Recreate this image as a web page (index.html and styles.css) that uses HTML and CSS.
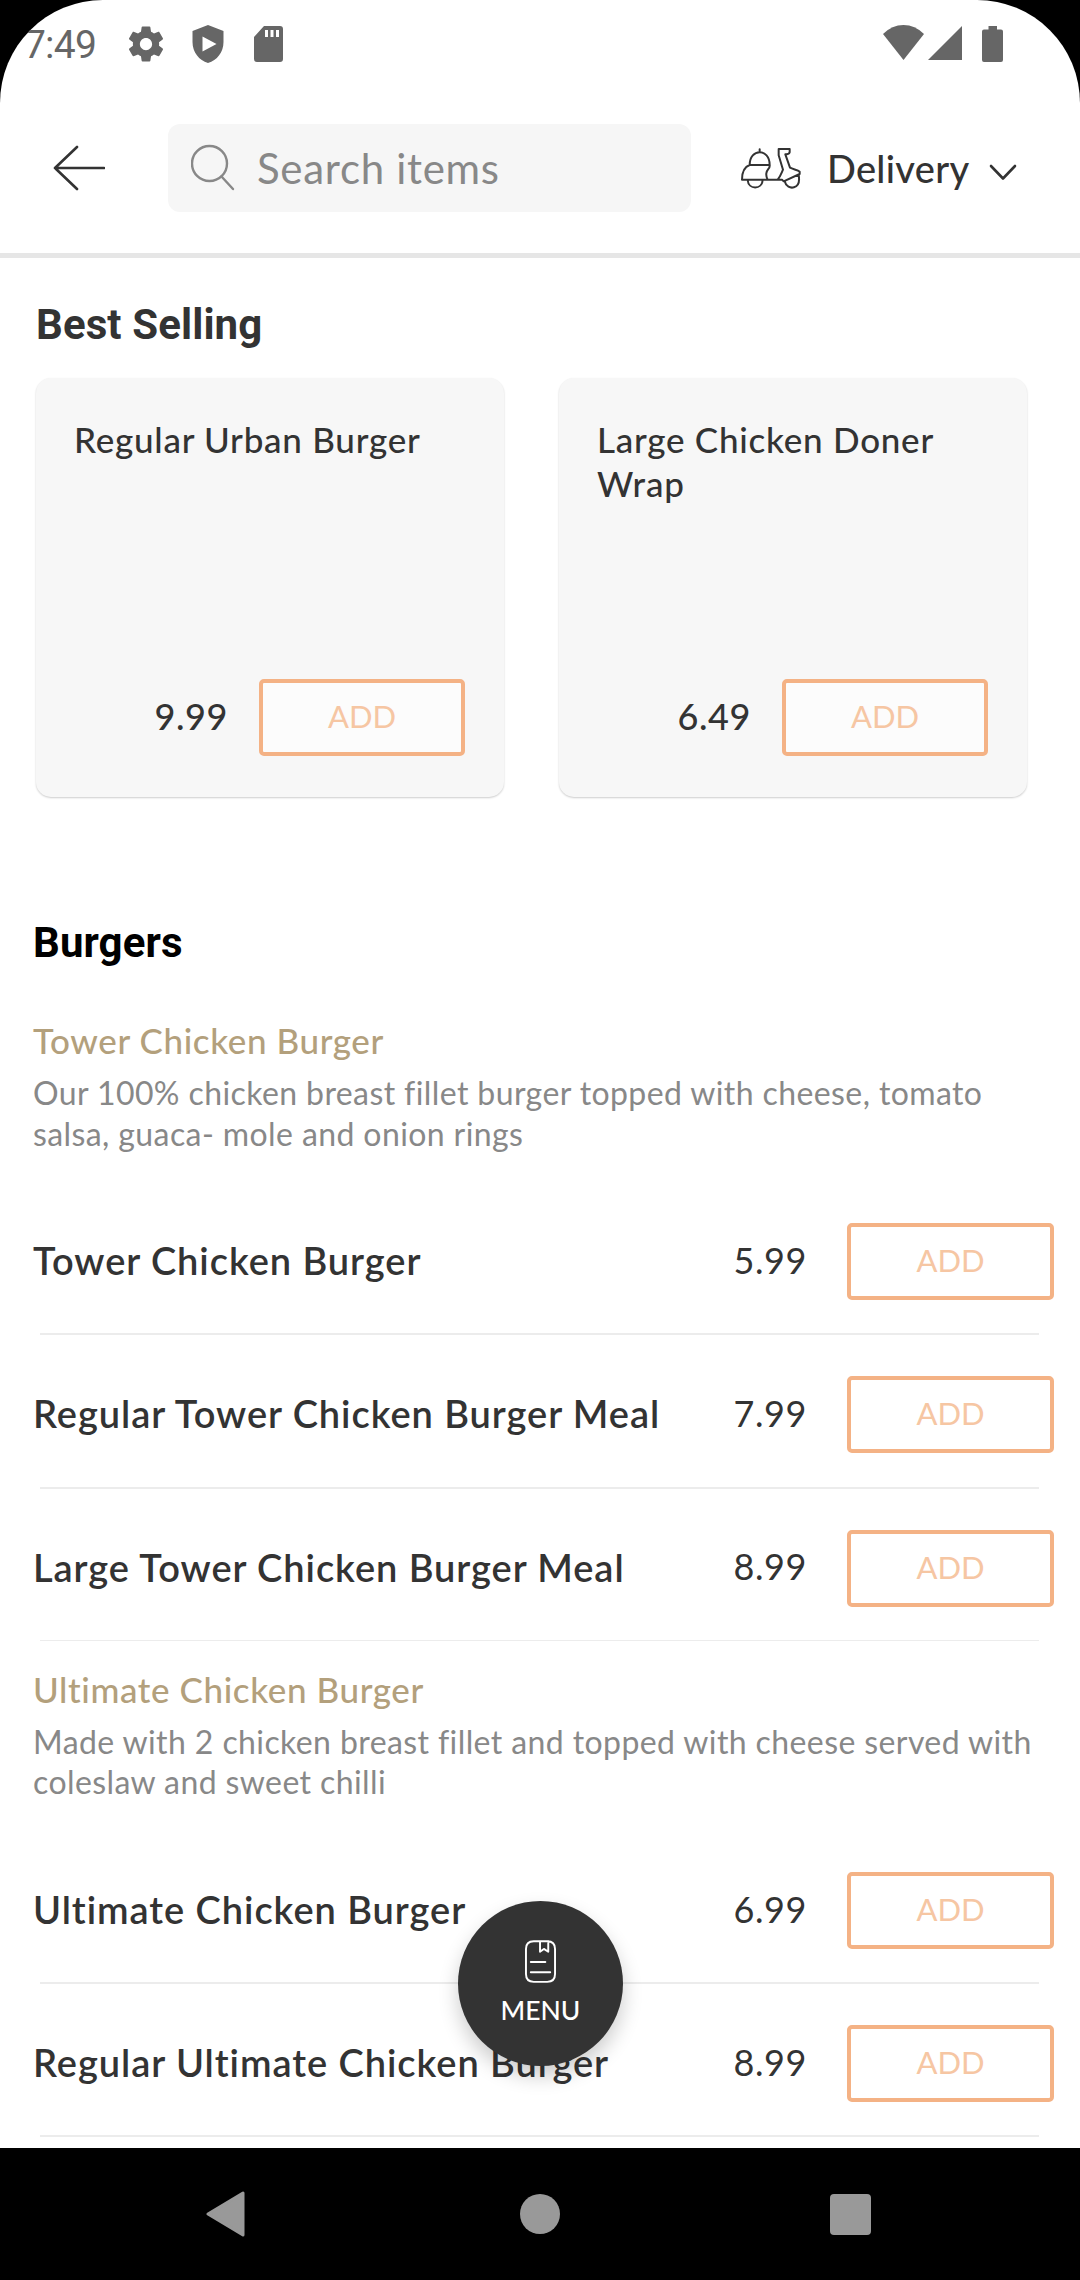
FILE: index.html
```
<!DOCTYPE html>
<html lang="en">
<head>
    <meta charset="UTF-8">
    <meta name="viewport" content="width=device-width, initial-scale=1.0">
    <title>Menu</title>
    <link rel="stylesheet" href="styles.css">
</head>
<body>

<div class="screen">

    <!-- Status Bar -->
    <div class="status-bar">
        <span class="time">7:49</span>
        <svg class="icon-gear" width="42" height="42" viewBox="0 0 24 24"><path d="M19.43 12.98c.04-.32.07-.64.07-.98s-.03-.66-.07-.98l2.11-1.65c.19-.15.24-.42.12-.64l-2-3.46c-.12-.22-.39-.3-.61-.22l-2.49 1c-.52-.4-1.08-.73-1.69-.98l-.38-2.65C14.46 2.18 14.25 2 14 2h-4c-.25 0-.46.18-.49.42l-.38 2.65c-.61.25-1.17.59-1.69.98l-2.49-1c-.23-.09-.49 0-.61.22l-2 3.46c-.13.22-.07.49.12.64l2.11 1.65c-.04.32-.07.65-.07.98s.03.66.07.98l-2.11 1.65c-.19.15-.24.42-.12.64l2 3.46c.12.22.39.3.61.22l2.49-1c.52.4 1.08.73 1.69.98l.38 2.65c.03.24.24.42.49.42h4c.25 0 .46-.18.49-.42l.38-2.65c.61-.25 1.17-.59 1.69-.98l2.49 1c.23.09.49 0 .61-.22l2-3.46c.12-.22.07-.49-.12-.64l-2.11-1.65zM12 15.5c-1.93 0-3.5-1.57-3.5-3.5s1.57-3.5 3.5-3.5 3.5 1.57 3.5 3.5-1.57 3.5-3.5 3.5z"/></svg>
        <svg class="icon-shield" width="32" height="38" viewBox="0 0 32 38"><path fill-rule="evenodd" d="M16 0L31.500 6V17C31.500 27 25 35.500 16 38C7 35.500 .5 27 .5 17V6ZM10.500 11.500V26.500L24.500 19Z"/></svg>
        <svg class="icon-sd" width="29" height="36" viewBox="0 0 29 36"><path fill-rule="evenodd" d="M10 0H26Q29 0 29 3V33Q29 36 26 36H3Q0 36 0 33V11ZM11 4V11H14V4ZM16.500 4V11H19.500V4ZM22 4V11H25V4Z"/></svg>
        <span class="spacer"></span>
        <svg class="icon-wifi" width="41" height="35" viewBox="0 0 41 35"><path d="M0 9Q9 0 20.500 0T41 9L20.500 35Z"/></svg>
        <svg class="icon-signal" width="34" height="34" viewBox="0 0 34 34"><path d="M34 0V34H0Z"/></svg>
        <svg class="icon-battery" width="21" height="36" viewBox="0 0 21 36"><path d="M6.500 0H15V3.500H19Q21 3.500 21 5.500V34Q21 36 19 36H2Q0 36 0 34V5.500Q0 3.500 2 3.500H6.500Z"/></svg>
    </div>

    <!-- Header -->
    <header class="header">
        <svg class="back" width="52" height="46" viewBox="0 0 52 46"><path d="M24 2L2 23L24 44M2 23H51"/></svg>
        <div class="search">
            <svg width="44" height="48" viewBox="0 0 44 48"><circle cx="18.500" cy="19.500" r="17.500"/><path d="M30.500 32.500L42 45"/></svg>
            <span>Search items</span>
        </div>
        <div class="delivery">
            <svg class="scooter" width="60" height="43" viewBox="62 109 180 129">
                <path d="M88 163C88 112 148 112 148 163M118 124V116M88 163H148M88 163C74 168 65 184 65 207H172M148 163C150 174 139 176 138 188C137 197 139 202 142 207M172 207C181 196 184 185 188 177L175 134V115H208V125Q206 132 195 131L209 171C218 176 233 178 238 183V190L190 212L185 207H172M82 208C84 238 125 238 127 208M193 212C197 228 210 233 221 230C235 226 238 210 235 193"/>
            </svg>
            <span>Delivery</span>
            <svg class="chevron" width="28" height="17" viewBox="0 0 28 17"><path d="M2 2L14 14.500L26 2"/></svg>
        </div>
    </header>

    <main class="content">

        <!-- Best Selling -->
        <h2 class="best-title">Best Selling</h2>
        <div class="cards">
            <div class="card">
                <p class="card-name">Regular Urban Burger</p>
                <div class="card-footer">
                    <span class="price">9.99</span>
                    <button class="add">ADD</button>
                </div>
            </div>
            <div class="card">
                <p class="card-name">Large Chicken Doner Wrap</p>
                <div class="card-footer">
                    <span class="price">6.49</span>
                    <button class="add">ADD</button>
                </div>
            </div>
        </div>

        <!-- Burgers -->
        <h2 class="section-title">Burgers</h2>

        <section class="group">
            <h3>Tower Chicken Burger</h3>
            <p class="desc">Our 100% chicken breast fillet burger topped with cheese, tomato<br>salsa, guaca- mole and onion rings</p>
            <ul>
                <li>
                    <div class="row">
                        <span class="name">Tower Chicken Burger</span>
                        <span class="price">5.99</span>
                        <button class="add">ADD</button>
                    </div>
                    <div class="divider"></div>
                </li>
                <li>
                    <div class="row">
                        <span class="name">Regular Tower Chicken Burger Meal</span>
                        <span class="price">7.99</span>
                        <button class="add">ADD</button>
                    </div>
                    <div class="divider"></div>
                </li>
                <li>
                    <div class="row">
                        <span class="name">Large Tower Chicken Burger Meal</span>
                        <span class="price">8.99</span>
                        <button class="add">ADD</button>
                    </div>
                    <div class="divider thin"></div>
                </li>
            </ul>
        </section>

        <section class="group">
            <h3>Ultimate Chicken Burger</h3>
            <p class="desc">Made with 2 chicken breast fillet and topped with cheese served with<br>coleslaw and sweet chilli</p>
            <ul>
                <li>
                    <div class="row">
                        <span class="name">Ultimate Chicken Burger</span>
                        <span class="price">6.99</span>
                        <button class="add">ADD</button>
                    </div>
                    <div class="divider"></div>
                </li>
                <li>
                    <div class="row">
                        <span class="name">Regular Ultimate Chicken Burger</span>
                        <span class="price">8.99</span>
                        <button class="add">ADD</button>
                    </div>
                    <div class="divider"></div>
                </li>
            </ul>
        </section>
    </main>

    <!-- Floating Menu Button -->
    <div class="fab">
        <svg width="31" height="43" viewBox="0 0 32 44"><path d="M9 1H23Q31 1 31 9V35Q31 43 23 43H9Q1 43 1 35V9Q1 1 9 1ZM15.500 1V12L19.500 9L24 12V1M6 22.500H21M6 33H26"/></svg>
        <span>MENU</span>
    </div>
</div>

<!-- Navigation Bar -->
<nav class="nav-bar">
    <svg width="40" height="46" viewBox="0 0 40 46"><path d="M37 2V44L2 23Z"/></svg>
    <span class="home"></span>
    <span class="recent"></span>
</nav>

</body>
</html>
```
FILE: styles.css
```
/* General Styling */
* {
    box-sizing: border-box;
}

body {
    margin: 0;
    width: 1080px;
    height: 2280px;
    overflow: hidden;
    background: #000;
    color: #333;
    font-family: Lato, "Open Sans", sans-serif;
}

h2, h3, p, ul {
    margin: 0;
    padding: 0;
}

ul {
    list-style-type: none;
}

svg {
    display: block;
    flex: none;
    fill: none;
    stroke-linecap: round;
    stroke-linejoin: round;
}

.screen {
    position: relative;
    height: 2148px;
    overflow: hidden;
    background: #fff;
    border-radius: 103px 103px 0 0;
}

/* Status Bar */
.status-bar {
    display: flex;
    align-items: center;
    height: 88px;
    padding: 0 77px 0 24px;
}

.status-bar svg {
    fill: #666;
}

.time {
    width: 101px;
    padding-top: 2px;
    font-family: Roboto, sans-serif;
    font-size: 39px;
    letter-spacing: -0.8px;
    color: #666;
}

.icon-shield {
    margin-left: 25px;
}

.icon-sd {
    margin-left: 30px;
}

.spacer {
    flex: 1;
}

.icon-wifi {
    margin-bottom: 4px;
}

.icon-signal {
    margin: 0 20px 3px 4px;
}

/* Header */
.header {
    display: flex;
    align-items: center;
    height: 170px;
    padding-left: 53px;
    padding-bottom: 5px;
    border-bottom: 5px solid #e6e6e6;
}

.back {
    stroke: #333;
    stroke-width: 2.6;
}

.search {
    display: flex;
    align-items: center;
    width: 523px;
    height: 88px;
    margin-left: 63px;
    padding-left: 23px;
    background: #f6f6f6;
    border-radius: 12px;
}

.search svg {
    stroke: #888;
    stroke-width: 2.4;
}

.search span {
    margin-left: 22px;
    font-size: 42px;
    letter-spacing: 0.7px;
    color: #888;
}

.delivery {
    display: flex;
    align-items: center;
    margin-left: 50px;
}

.scooter {
    stroke: #333;
    stroke-width: 6;
}

.delivery span {
    margin-left: 26px;
    font-size: 38px;
    font-weight: 500;
    letter-spacing: 0.3px;
}

.chevron {
    margin: 8px 0 0 20px;
    stroke: #333;
    stroke-width: 2.6;
}

/* Best Selling */
.content {
    padding: 42px 26px 0 33px;
}

h2 {
    font-family: Roboto, sans-serif;
    font-size: 42px;
    font-weight: 700;
    line-height: 50px;
    letter-spacing: 0.1px;
}

.best-title {
    padding-left: 3px;
}

.cards {
    display: flex;
    gap: 55px;
    margin-top: 28px;
    padding-left: 3px;
}

.card {
    display: flex;
    flex-direction: column;
    justify-content: space-between;
    width: 468px;
    height: 419px;
    padding: 39px 39px 41px 38px;
    background: #f7f7f7;
    border-radius: 15px;
    box-shadow: 0 1px 2px rgba(0,0,0,0.2);
}

.card-name {
    font-size: 35px;
    font-weight: 500;
    line-height: 44px;
    letter-spacing: 0.75px;
}

.card-footer {
    display: flex;
    justify-content: flex-end;
    align-items: center;
}

.price {
    padding-bottom: 4px;
    font-size: 36px;
    letter-spacing: 0.6px;
}

.card .price {
    margin-right: 31px;
    font-weight: 500;
}

.add {
    flex: none;
    width: 206px;
    height: 77px;
    padding: 0 0 3px;
    border: 4px solid #f4b285;
    border-radius: 5px;
    background: rgba(255,255,255,0.6);
    font-family: inherit;
    font-size: 31px;
    letter-spacing: 0;
    color: #f6c6a3;
}

/* Menu List */
.section-title {
    margin: 121px 0 50px;
    color: #000;
}

.group + .group {
    margin-top: 26px;
}

h3 {
    font-size: 35px;
    font-weight: 500;
    line-height: 44px;
    letter-spacing: 0.6px;
    color: #b3a07c;
}

.desc {
    margin: 11px 0 28px;
    font-size: 32px;
    line-height: 40.5px;
    letter-spacing: 0.4px;
    white-space: nowrap;
    color: #888;
}

.row {
    display: flex;
    align-items: center;
    height: 151.3px;
    padding-top: 8px;
}

.name {
    flex: 1;
    padding-bottom: 3px;
    font-size: 38px;
    font-weight: 600;
    letter-spacing: 0.95px;
}

.row .price {
    margin-right: 40px;
}

.row .add {
    width: 207px;
}

.divider {
    height: 2px;
    margin: 0 15px 0 7px;
    background: #ececec;
}

.thin {
    height: 1px;
    margin-bottom: 1px;
}

/* Floating Menu Button */
.fab {
    position: absolute;
    left: 458px;
    top: 1901px;
    width: 165px;
    height: 165px;
    padding-top: 39px;
    display: flex;
    flex-direction: column;
    align-items: center;
    background: #333;
    color: #fff;
    border-radius: 50%;
    box-shadow: 0 10px 20px rgba(0,0,0,0.2);
}

.fab svg {
    stroke: #fff;
    stroke-width: 2;
}

.fab span {
    margin-top: 10px;
    font-size: 26.5px;
    font-weight: 500;
    line-height: 34px;
}

/* Navigation Bar */
.nav-bar {
    display: flex;
    align-items: center;
    justify-content: space-between;
    height: 132px;
    padding: 0 209px 0 206px;
}

.nav-bar svg {
    fill: #999;
    stroke: #999;
    stroke-width: 3;
}

.home {
    width: 40px;
    height: 40px;
    margin-left: 3px;
    background: #999;
    border-radius: 50%;
}

.recent {
    width: 41px;
    height: 41px;
    background: #999;
    border-radius: 4px;
}
```
